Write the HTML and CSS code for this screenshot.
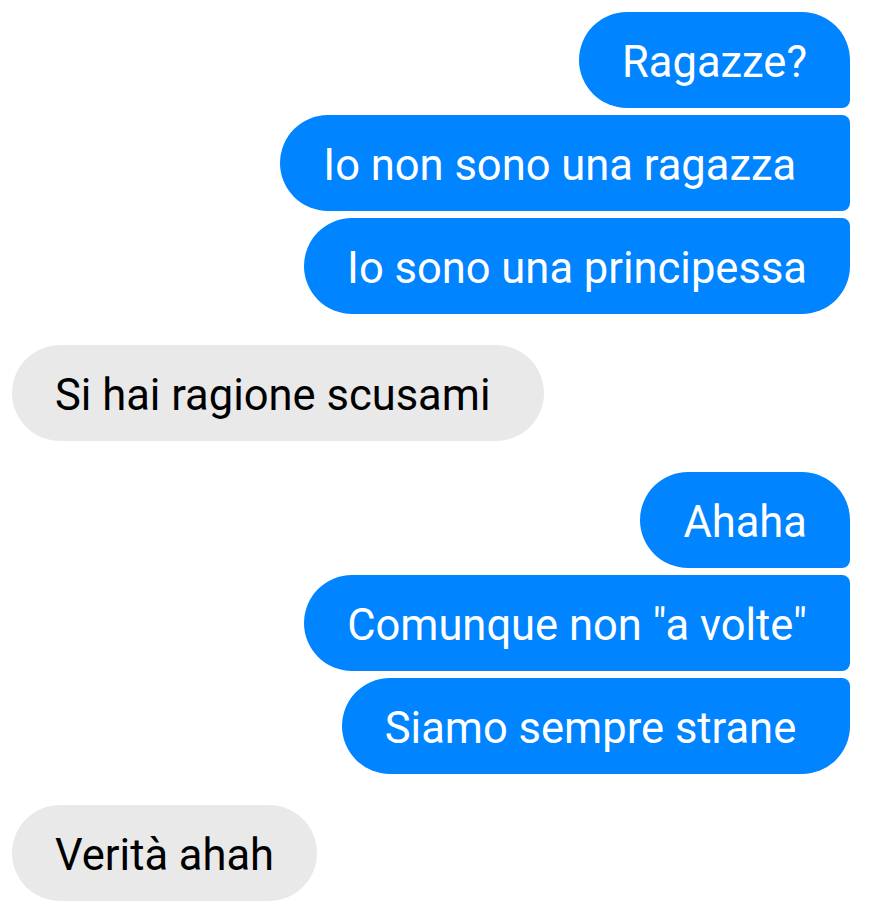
FILE: index.html
```html
<!DOCTYPE html>
<html lang="it">
<head>
    <meta charset="UTF-8">
    <meta name="viewport" content="width=device-width, initial-scale=1.0">
    <title>Chat</title>
    <link rel="stylesheet" href="styles.css">
</head>
<body>
    <div class="thread">
        <div class="group out">
            <div class="bubble first">Ragazze?</div>
            <div class="bubble middle">Io non sono una ragazza </div>
            <div class="bubble last">Io sono una principessa</div>
        </div>

        <div class="group in">
            <div class="bubble single">Si hai ragione scusami </div>
        </div>

        <div class="group out">
            <div class="bubble first">Ahaha</div>
            <div class="bubble middle">Comunque non "a volte"</div>
            <div class="bubble last">Siamo sempre strane </div>
        </div>

        <div class="group in">
            <div class="bubble single">Verità ahah</div>
        </div>
    </div>
</body>
</html>
```

FILE: styles.css
```css
body {
    font-family: Roboto, "Noto Sans", sans-serif;
    margin: 0;
    background: #ffffff;
}

.thread {
    display: flex;
    flex-direction: column;
    gap: 31px;
    padding: 12px 42px 0 12px;
}

.group {
    display: flex;
    flex-direction: column;
    gap: 7px;
}

.group.out {
    align-items: flex-end;
}

.group.in {
    align-items: flex-start;
}

.bubble {
    box-sizing: border-box;
    height: 96px;
    padding: 6px 43px 0;
    line-height: 90px;
    font-size: 43.5px;
    white-space: pre;
    border-radius: 48px;
}

.out .bubble {
    background: #0084ff;
    color: #ffffff;
}

.in .bubble {
    background: #e9e9e9;
    color: #000000;
}

.out .first {
    border-bottom-right-radius: 8px;
}

.out .middle {
    border-top-right-radius: 8px;
    border-bottom-right-radius: 8px;
}

.out .last {
    border-top-right-radius: 8px;
}
```
